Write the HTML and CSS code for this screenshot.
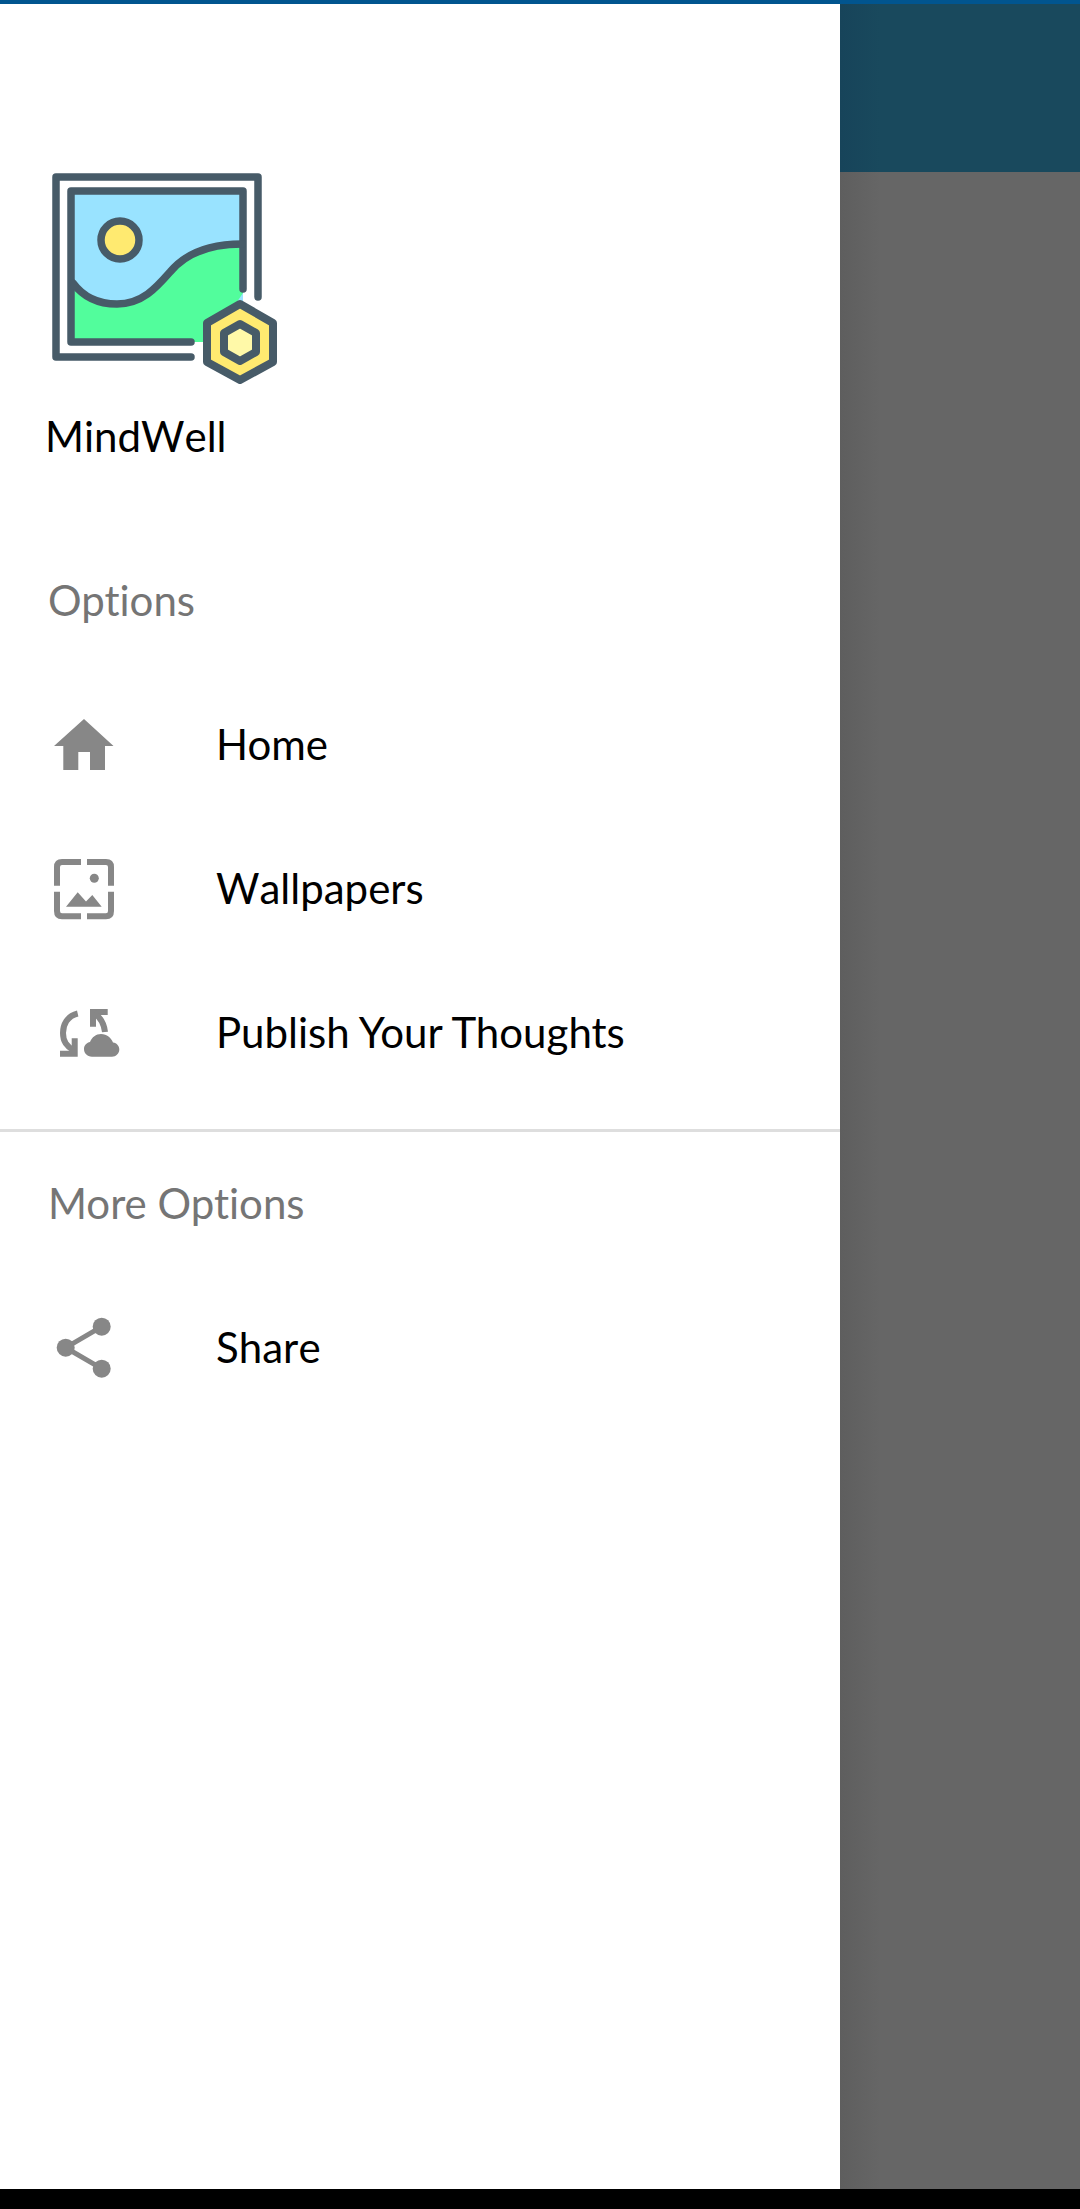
FILE: index.html
```html
<!DOCTYPE html>
<html lang="en">
<head>
<meta charset="utf-8">
<title>MindWell</title>
<link rel="stylesheet" href="styles.css">
</head>
<body>
<div class="screen">
  <div class="status"></div>
  <div class="main">
    <nav class="drawer">
      <svg class="logo" viewBox="0 0 270 250" width="270" height="250">
        <rect x="41" y="41" width="172" height="151" fill="#99e3ff"/>
        <path d="M41 130 C52 147 68 154 87 154 C112 154 126 138 140 122 C155 104 180 94 213 94 V143 L180 192 H41 Z" fill="#52fd9c"/>
        <g fill="none" stroke="#475b68" stroke-width="7.5" stroke-linecap="round" stroke-linejoin="round">
          <path d="M228 147 V27 H26 V207 H161"/>
          <path d="M213 139 V41 H41 V192 H161"/>
          <path d="M43 133 C54 148 68 154 87 154 C112 154 126 138 140 122 C155 104 180 94 212 94"/>
          <circle cx="90" cy="90" r="19" fill="#ffea70"/>
          <path class="hex" d="M210 154 L243 173 V212 L210 230 L177 212 V173 Z" fill="#ffea70"/>
          <path class="hex" d="M210 174 L226 183 V202 L210 211 L194 202 V183 Z" fill="#fff9a8"/>
        </g>
      </svg>
      <div class="app-name unkerned">MindWell</div>
      <div class="section-title first">Options</div>
      <a class="row">
        <svg class="icon" viewBox="0 0 110 100"><path d="M54 25 L83.5 52 H75 V76 H60 V58 H48.3 V76 H33.3 V52 H24 Z"/></svg>
        <span>Home</span>
      </a>
      <a class="row">
        <svg class="icon" viewBox="0 0 110 100">
          <g class="line"><path d="M27 47.7 V29 Q27 24 32 24 H51"/><path d="M57 24 H76 Q81 24 81 29 V47.7"/><path d="M81 53.7 V73 Q81 78.3 76 78.3 H57"/><path d="M51 78.3 H32 Q27 78.3 27 73 V53.7"/></g>
          <circle cx="64.3" cy="40.3" r="4.5"/>
          <path d="M36 68.7 L47.7 54.3 L56 63.5 L62.3 57 L71.7 68.7 Z"/>
        </svg>
        <span class="unkerned">Wallpapers</span>
      </a>
      <a class="row">
        <svg class="icon" viewBox="0 0 110 100">
          <path class="line" d="M47.7 31.5 C37 34 33 43 33 51 C33 60 37 64 43 68"/>
          <path d="M30 68.7 H41.7 V56.3 H47.7 V74.7 H30 Z"/>
          <path d="M60 27 H77.7 V33 H66 V44.7 H60 Z"/>
          <path class="line" d="M64 31 C70 35 74 41 75 50"/>
          <path d="M62 74.7 C57 74.7 54 71 54 67 C54 63 57 60.5 60 60 C62 55 66 52 71 52 C77 52 81 56 83 60.5 C87 61 89.3 64 89.3 67.5 C89.3 71.5 86 74.7 82 74.7 Z"/>
        </svg>
        <span>Publish Your Thoughts</span>
      </a>
      <hr class="divider">
      <div class="section-title">More Options</div>
      <a class="row">
        <svg class="icon" viewBox="0 0 110 100">
          <path class="line thin" d="M71.7 29.7 L35.7 50.7 L71.7 71.7"/>
          <circle cx="35.7" cy="50.7" r="9"/><circle cx="71.7" cy="29.7" r="9"/><circle cx="71.7" cy="71.7" r="9"/>
        </svg>
        <span class="unkerned">Share</span>
      </a>
    </nav>
    <div class="backdrop">
      <div class="appbar"></div>
      <div class="scrim"></div>
    </div>
  </div>
  <div class="navbar"></div>
</div>
</body>
</html>
```
FILE: styles.css
```css
* { box-sizing: border-box; }
html, body { margin: 0; padding: 0; }
body { font-family: Lato, "Liberation Sans", sans-serif; font-variant-ligatures: none; background: #000; }
.unkerned { font-kerning: none; }
.screen { width: 1080px; height: 2209px; display: flex; flex-direction: column; overflow: hidden; }
.status { height: 4px; background: #01558f; flex: none; }
.main { flex: 1; display: flex; min-height: 0; }
.navbar { height: 20px; background: #000; flex: none; }
.drawer { width: 840px; background: #fff; padding-top: 146px; display: flex; flex-direction: column; flex: none; }
.logo { display: block; margin-left: 30px; flex: none; }
.hex { stroke-width: 8; }
.app-name { margin: 10px 0 0 45px; font-size: 42px; line-height: 52px; color: #000; }
.section-title { margin-left: 48px; font-size: 42px; line-height: 50px; color: #757575; }
.section-title.first { margin-top: 113px; margin-bottom: 47px; }
.divider + .section-title { margin-top: 46px; margin-bottom: 47px; }
.row { display: flex; align-items: center; height: 144px; padding-left: 30px; color: #000; font-size: 42px; }
.row + .divider { margin-top: 25px; }
.icon { width: 110px; height: 100px; flex: none; margin-right: 76px; fill: #878787; }
.line { fill: none; stroke: #878787; stroke-width: 6; }
.thin { stroke-width: 5; }
.divider { border: 0; height: 3px; background: #dedede; margin: 0; flex: none; }
.backdrop { flex: 1; display: flex; flex-direction: column; }
.appbar { height: 168px; background: linear-gradient(90deg, #17445a 0, #19495d 40px); flex: none; }
.scrim { flex: 1; background: linear-gradient(90deg, #5e5e5e 0, #666 40px); }
```
